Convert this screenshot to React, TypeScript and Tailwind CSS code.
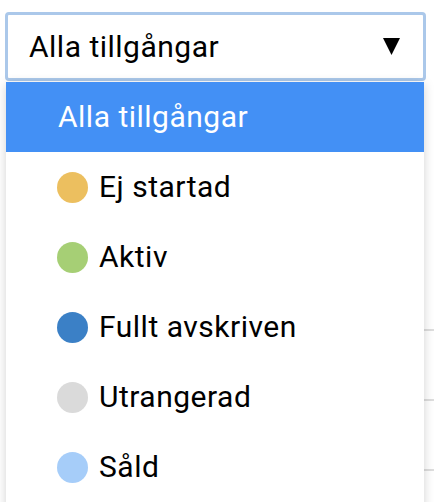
import React from "react";

const items = [
  { label: "Ej startad", color: "bg-[#ecbf5f]" },
  { label: "Aktiv", color: "bg-[#a6cf75]" },
  { label: "Fullt avskriven", color: "bg-[#3b80c6]" },
  { label: "Utrangerad", color: "bg-[#dadada]" },
  { label: "Såld", color: "bg-[#a6cdf9]" },
];

export default function App() {
  return (
    <div className="relative w-[434px] h-[502px] overflow-hidden bg-white font-['Roboto',sans-serif] text-black">
      <div className="pt-[12px] pl-[5px]">
        <div className="w-[421px] h-[69px] border-[3px] border-[#abc8ea] rounded-[4px] flex items-center justify-between pl-[21px] pr-[23px]">
          <span className="text-[30px] leading-none tracking-[0.5px]">Alla tillgångar</span>
          <svg width="17" height="17" viewBox="0 0 17 17">
            <polygon points="0,0 17,0 8.5,17" fill="#000" />
          </svg>
        </div>
      </div>
      <div className="flex flex-col mt-[180px] ml-[40px]">
        <div className="h-[70px] border-b-2 border-[#dedede]" />
        <div className="h-[70px] border-b-2 border-[#dedede]" />
        <div className="h-[70px] border-b-2 border-[#dedede]" />
        <div className="h-[70px]" />
      </div>
      <div className="absolute left-[6px] top-[82px] w-[418px] h-[440px] bg-white shadow-[0_2px_10px_rgba(0,0,0,0.18)]">
        <div className="h-[70px] bg-[#4390f5] flex items-center pl-[52px] text-white text-[30px] leading-none tracking-[0.5px]">
          Alla tillgångar
        </div>
        {items.map((it) => (
          <div key={it.label} className="h-[70px] flex items-center pl-[51px]">
            <span className={`w-[31px] h-[31px] rounded-full ${it.color} mr-[11px] shrink-0`} />
            <span className="text-[30px] leading-none tracking-[0.5px]">{it.label}</span>
          </div>
        ))}
      </div>
    </div>
  );
}
